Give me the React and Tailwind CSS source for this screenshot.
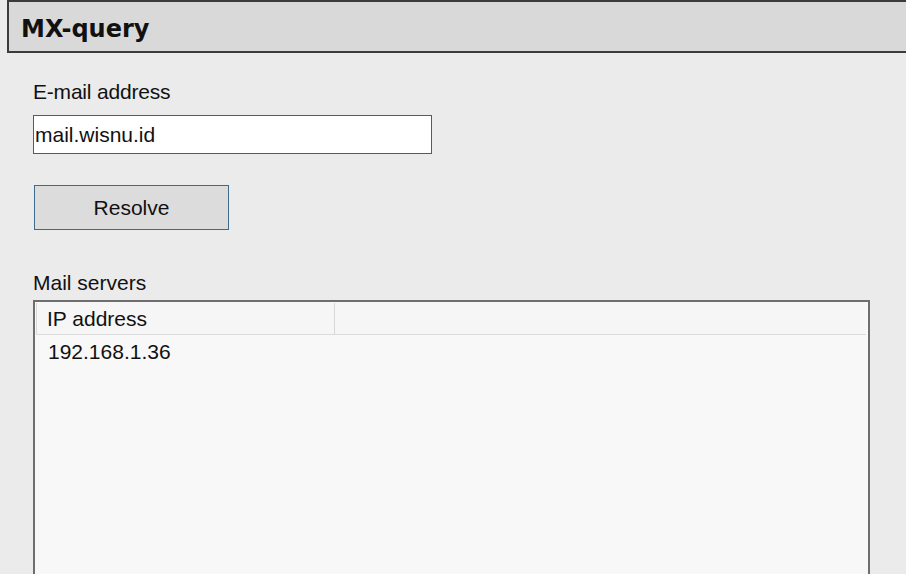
export default function App() {
  return (
    <div className="w-[906px] h-[574px] overflow-hidden bg-[#ebebeb] font-['Liberation_Sans',Arial,sans-serif] text-[#111]">
      <div className="ml-[7px] h-[53px] border-y-2 border-l-2 border-[#3b3b3b] bg-[#d9d9d9] flex items-center pl-[12px]">
        <span className="font-['DejaVu_Sans',Verdana,sans-serif] font-bold text-[24px] leading-none text-[#111] pt-[4px]">MX-query</span>
      </div>
      <div className="pl-[33px] pt-[27px] flex flex-col items-start">
        <div className="text-[21px] leading-[23px] tracking-[-0.2px]">E-mail address</div>
        <div className="mt-[12px] w-[399px] h-[39px] border border-[#5a5a5a] bg-white flex items-center pl-[1px] text-[21px]">
          mail.wisnu.id
        </div>
        <button className="mt-[31px] ml-[1px] w-[195px] h-[45px] border border-[#3f6a8a] bg-[#dcdcdc] text-[21px] flex items-center justify-center">
          Resolve
        </button>
        <div className="mt-[41px] text-[21px] leading-[23px]">Mail servers</div>
        <div className="mt-[6px] w-[837px] h-[300px] border-2 border-[#6e6e6e] bg-[#f8f8f8] pt-[1px] pl-[1px] pr-[2px]">
          <div className="flex h-[32px] border-b border-[#dcdcdc] bg-[#f6f6f6]">
            <div className="w-[299px] border-l border-r border-[#d8d8d8] pl-[10px] flex items-center text-[21px]">IP address</div>
            <div className="flex-1" />
          </div>
          <div className="pl-[12px] pt-[5px] text-[21px] leading-[23px]">192.168.1.36</div>
        </div>
      </div>
    </div>
  );
}
